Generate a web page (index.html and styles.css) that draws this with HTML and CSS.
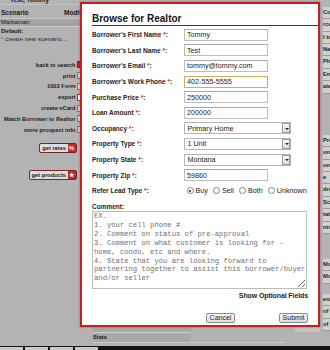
FILE: index.html
```html
<!DOCTYPE html>
<html>
<head>
<meta charset="utf-8">
<title>Browse for Realtor</title>
<link rel="stylesheet" href="styles.css">
</head>
<body>
<div class="page">
  <aside class="side">
    <div class="side-title">Test, Tommy</div>
    <div class="scen-head"><span>Scenario</span><span>Modif</span></div>
    <div class="scen-row sel">Markaman</div>
    <div class="scen-row def">Default:</div>
    <div class="scen-row new"><span class="req">*</span> create new scenario...</div>
    <ul class="actions">
      <li>back to search <i class="ico red"></i></li>
      <li>print <i class="ico"></i></li>
      <li>1003 Form <i class="ico"></i></li>
      <li>export <i class="ico outline"></i></li>
      <li>create vCard <i class="ico"></i></li>
      <li>Match Borrower to Realtor <i class="ico"></i></li>
      <li>more prospect info <i class="ico"></i></li>
    </ul>
    <div class="pill-row rates"><span class="pill">get rates <i class="pico">%</i></span></div>
    <div class="pill-row products"><span class="pill">get products <i class="pico">&#9733;</i></span></div>
  </aside>

  <main class="center">
    <div class="c-row-a"><span class="c-block"></span></div>
    <div class="c-state">State</div>
    <div class="c-line"></div>
  </main>

  <div class="rightcol">
    <div class="gap g-top"></div>
    <div class="rc">Co-E</div>
    <div class="rc">rce</div>
    <div class="rc">l to</div>
    <div class="rc">Nam</div>
    <div class="rc">Phon</div>
    <div class="rc">Ema</div>
    <div class="rc">ate</div>
    <div class="gap g-1"></div>
    <div class="rc">Pref</div>
    <div class="rc">one</div>
    <div class="rc">one</div>
    <div class="rc">e</div>
    <div class="rc">dre</div>
    <div class="rc">Sch</div>
    <div class="rc">tate</div>
    <div class="rc">nts</div>
    <div class="gap g-2"></div>
    <div class="rc">Mort</div>
    <div class="rc">Mort</div>
    <div class="gap g-3"></div>
    <div class="rc">esid</div>
    <div class="rc">of y</div>
    <div class="rc">of m</div>
  </div>
</div>
<div class="footer">
  <span class="tab"></span><span class="tab"></span><span class="tab"></span><span class="tab"></span>
</div>

<div class="modal">
  <h1 class="modal-title">Browse for Realtor</h1>
  <form class="form">
    <label class="lbl">Borrower's First Name <span class="req">*</span>:</label>
    <input class="inp" type="text" value="Tommy">
    <label class="lbl">Borrower's Last Name <span class="req">*</span>:</label>
    <input class="inp" type="text" value="Test">
    <label class="lbl">Borrower's Email <span class="req">*</span>:</label>
    <input class="inp" type="text" value="tommy@tommy.com">
    <label class="lbl">Borrower's Work Phone <span class="req">*</span>:</label>
    <input class="inp focus" type="text" value="402-555-5555">
    <label class="lbl">Purchase Price <span class="req">*</span>:</label>
    <input class="inp" type="text" value="250000">
    <label class="lbl">Loan Amount <span class="req">*</span>:</label>
    <input class="inp" type="text" value="200000">
    <label class="lbl">Occupancy <span class="req">*</span>:</label>
    <div class="select"><span>Primary Home</span><span class="arrow"></span></div>
    <label class="lbl">Property Type <span class="req">*</span>:</label>
    <div class="select"><span>1 Unit</span><span class="arrow"></span></div>
    <label class="lbl">Property State <span class="req">*</span>:</label>
    <div class="select"><span>Montana</span><span class="arrow"></span></div>
    <label class="lbl">Property Zip <span class="req">*</span>:</label>
    <input class="inp" type="text" value="59860">
    <label class="lbl">Refer Lead Type <span class="req">*</span>:</label>
    <div class="radios">
      <span class="opt"><span class="radio on"></span>Buy</span>
      <span class="opt"><span class="radio"></span>Sell</span>
      <span class="opt"><span class="radio"></span>Both</span>
      <span class="opt"><span class="radio"></span>Unknown</span>
    </div>
  </form>
  <div class="lbl comment-lbl">Comment:</div>
  <textarea class="comment" wrap="off">EX.
1. your cell phone #
2. Comment on status of pre-approval
3. Comment on what customer is looking for -
home, condo, etc and where.
4. State that you are looking forward to
partnering together to assist this borrower/buyer
and/or seller</textarea>
  <div class="optional">Show Optional Fields</div>
  <div class="buttons">
    <button class="btn" type="button">Cancel</button>
    <button class="btn" type="button">Submit</button>
  </div>
</div>
</body>
</html>
```
FILE: styles.css
```css
* { box-sizing: border-box; margin: 0; padding: 0; }
html, body { width: 330px; height: 350px; overflow: hidden; }
body {
  background: #b3b3b3;
  font-family: "Liberation Sans", Arial, sans-serif;
  color: #1c1c1c;
  display: flex;
  flex-direction: column;
  position: relative;
}
.req { color: #d0302e; }

.page {
  flex: 1;
  min-height: 0;
  display: grid;
  grid-template-columns: 80px 240px 10px;
}

/* left panel */
.side { display: flex; flex-direction: column; font-size: 5.7px; min-width: 0; }
.side-title {
  margin-top: -5px;
  height: 10px;
  line-height: 10px;
  padding-left: 10px;
  font-weight: bold;
  font-size: 6.5px;
  border-bottom: 1px solid #c2c2c2;
}
.scen-head {
  display: grid;
  grid-template-columns: 63px 1fr;
  height: 13px;
  padding-top: 2px;
  padding-left: 1px;
  line-height: 11px;
  font-weight: bold;
  font-size: 6.5px;
  white-space: nowrap;
  overflow: hidden;
}
.scen-row { height: 8px; line-height: 8px; padding-left: 1px; font-size: 6px; white-space: nowrap; }
.scen-row.sel {
  height: 9px;
  background: #a3a3a3;
  border-top: 1px solid #c8c8c8;
  border-bottom: 1px solid #c8c8c8;
  line-height: 7px;
}
.scen-row.def { font-weight: bold; }
.scen-row.new { letter-spacing: 0.15px; }

.actions {
  list-style: none;
  margin-top: 16.5px;
  display: flex;
  flex-direction: column;
  margin-right: -3px;
}
.actions li {
  height: 10.8px;
  display: flex;
  align-items: center;
  justify-content: flex-end;
  gap: 1.5px;
  font-weight: bold;
  white-space: nowrap;
}
.ico { width: 6px; height: 7px; background: #d6d6d6; border: 1px solid #7a7a7a; }
.ico.red { background: #c4262a; border-color: #8a1a1a; }
.ico.outline { background: #fff; border-color: #c4262a; }

.pill-row { display: flex; justify-content: flex-end; padding-right: 3px; }
.pill-row.rates { margin-top: 7.5px; }
.pill-row.products { margin-top: 17px; }
.pill {
  display: flex;
  align-items: center;
  gap: 1.5px;
  height: 10px;
  padding: 0 0.5px 0 2px;
  border: 1px solid #7a2424;
  border-radius: 2px;
  background: #dedede;
  font-weight: bold;
  font-size: 5.7px;
  white-space: nowrap;
}
.pico {
  width: 8px;
  height: 8px;
  background: #c3272c;
  color: #fff;
  font-style: normal;
  font-size: 6px;
  display: flex;
  align-items: center;
  justify-content: center;
}

/* center (mostly behind modal) */
.center {
  display: flex;
  flex-direction: column;
  justify-content: flex-end;
  padding: 0 0 1px 12px;
  min-width: 0;
}
.c-row-a { height: 6px; display: flex; justify-content: flex-end; background: linear-gradient(to right, #a8a8a8 0 100px, transparent 100px); }
.c-block { width: 25px; background: #c4c4c4; }
.c-state {
  width: 98px;
  height: 10px;
  line-height: 9px;
  padding-left: 1px;
  background: #a9a9a9;
  border-top: 1px solid #cfcfcf;
  font-weight: bold;
  font-size: 5.7px;
}
.c-line { width: 193px; height: 3px; border-top: 1px solid #cacaca; }

/* right strip */
.rightcol {
  display: flex;
  flex-direction: column;
  padding-left: 3px;
  overflow: hidden;
  white-space: nowrap;
  font-weight: bold;
  font-size: 5.7px;
}
.rc {
  flex: none;
  height: 12.4px;
  line-height: 11.4px;
  background: #d0d0d0;
  border-bottom: 1px solid #999;
}
.gap { flex: none; }
.g-top { height: 6.8px; }
.g-1 { height: 41.4px; }
.g-2 { height: 25px; }
.g-3 { height: 10.2px; }

.footer {
  height: 4px;
  flex: none;
  background: #141414;
  display: flex;
  gap: 2px;
  padding-top: 1px;
}
.tab { width: 23px; height: 3px; background: #c9c9c9; }

/* modal */
.modal {
  position: absolute;
  left: 80px;
  top: 2px;
  width: 240px;
  height: 325px;
  border: 2px solid #c5201e;
  background: #fff;
  padding: 0 10px;
  display: flex;
  flex-direction: column;
  box-shadow: 0 0 2px rgba(0, 0, 0, 0.35);
}
.modal-title {
  font-size: 10px;
  line-height: 12px;
  padding-top: 9px;
  margin-right: -10px;
  border-bottom: 1px solid #7d2020;
  font-weight: bold;
  color: #151515;
}
.form {
  display: grid;
  grid-template-columns: 92px 1fr;
  grid-auto-rows: 15.6px;
  align-items: center;
  margin-top: 1px;
}
.lbl { font-size: 6.5px; font-weight: bold; color: #1e1e1e; white-space: nowrap; }
.inp {
  width: 84px;
  height: 12px;
  border: 1px solid #bdbdbd;
  border-top-color: #a8a8a8;
  padding: 0 2px;
  font-family: "Liberation Sans", Arial, sans-serif;
  font-size: 7.2px;
  color: #222;
  background: #fff;
  outline: none;
}
.inp.focus { border-color: #d6aa5c; }
.select {
  width: 107px;
  height: 12px;
  border: 1px solid #b5b5b5;
  display: flex;
  align-items: center;
  padding-left: 2.5px;
  font-size: 7.2px;
  color: #222;
  background: #fff;
}
.arrow {
  margin-left: auto;
  width: 8px;
  height: 10px;
  border: 1px solid #9a9a9a;
  background: linear-gradient(#fafafa, #dedede);
  position: relative;
}
.arrow::after {
  content: "";
  position: absolute;
  left: 1.5px;
  top: 3.5px;
  border-left: 2px solid transparent;
  border-right: 2px solid transparent;
  border-top: 2px solid #222;
}
.radios {
  display: flex;
  align-items: center;
  gap: 5.5px;
  padding-left: 3px;
  font-size: 7.2px;
  color: #222;
}
.opt { display: flex; align-items: center; gap: 2px; }
.radio {
  width: 6.5px;
  height: 6.5px;
  border: 1px solid #8c8c8c;
  border-radius: 50%;
  background: radial-gradient(circle, #fff 40%, #d9d9d9);
  position: relative;
}
.radio.on::after {
  content: "";
  position: absolute;
  left: 1.2px;
  top: 1.2px;
  width: 2.2px;
  height: 2.2px;
  border-radius: 50%;
  background: #222;
}
.comment-lbl { margin-top: 3px; line-height: 9px; }
.comment {
  width: 215px;
  height: 78px;
  border: 1px solid #bcbcbc;
  padding: 0.5px 0 0 1px;
  font-family: "Liberation Mono", "Courier New", monospace;
  font-size: 7.2px;
  line-height: 8.9px;
  color: #707070;
  overflow: hidden;
  white-space: pre;
  outline: none;
}
.optional {
  margin-top: 2.5px;
  line-height: 9px;
  text-align: right;
  font-size: 7px;
  font-weight: bold;
  color: #1e1e1e;
  letter-spacing: -0.1px;
}
.buttons {
  display: flex;
  justify-content: flex-end;
  gap: 44px;
  margin-top: 12.5px;
}
.btn {
  width: 29px;
  height: 10px;
  padding: 0;
  border: 1px solid #8a8a8a;
  border-radius: 2px;
  background: linear-gradient(#fbfbfb, #dcdcdc);
  font-family: "Liberation Sans", Arial, sans-serif;
  font-size: 7px;
  line-height: 8px;
  color: #222;
}
```
